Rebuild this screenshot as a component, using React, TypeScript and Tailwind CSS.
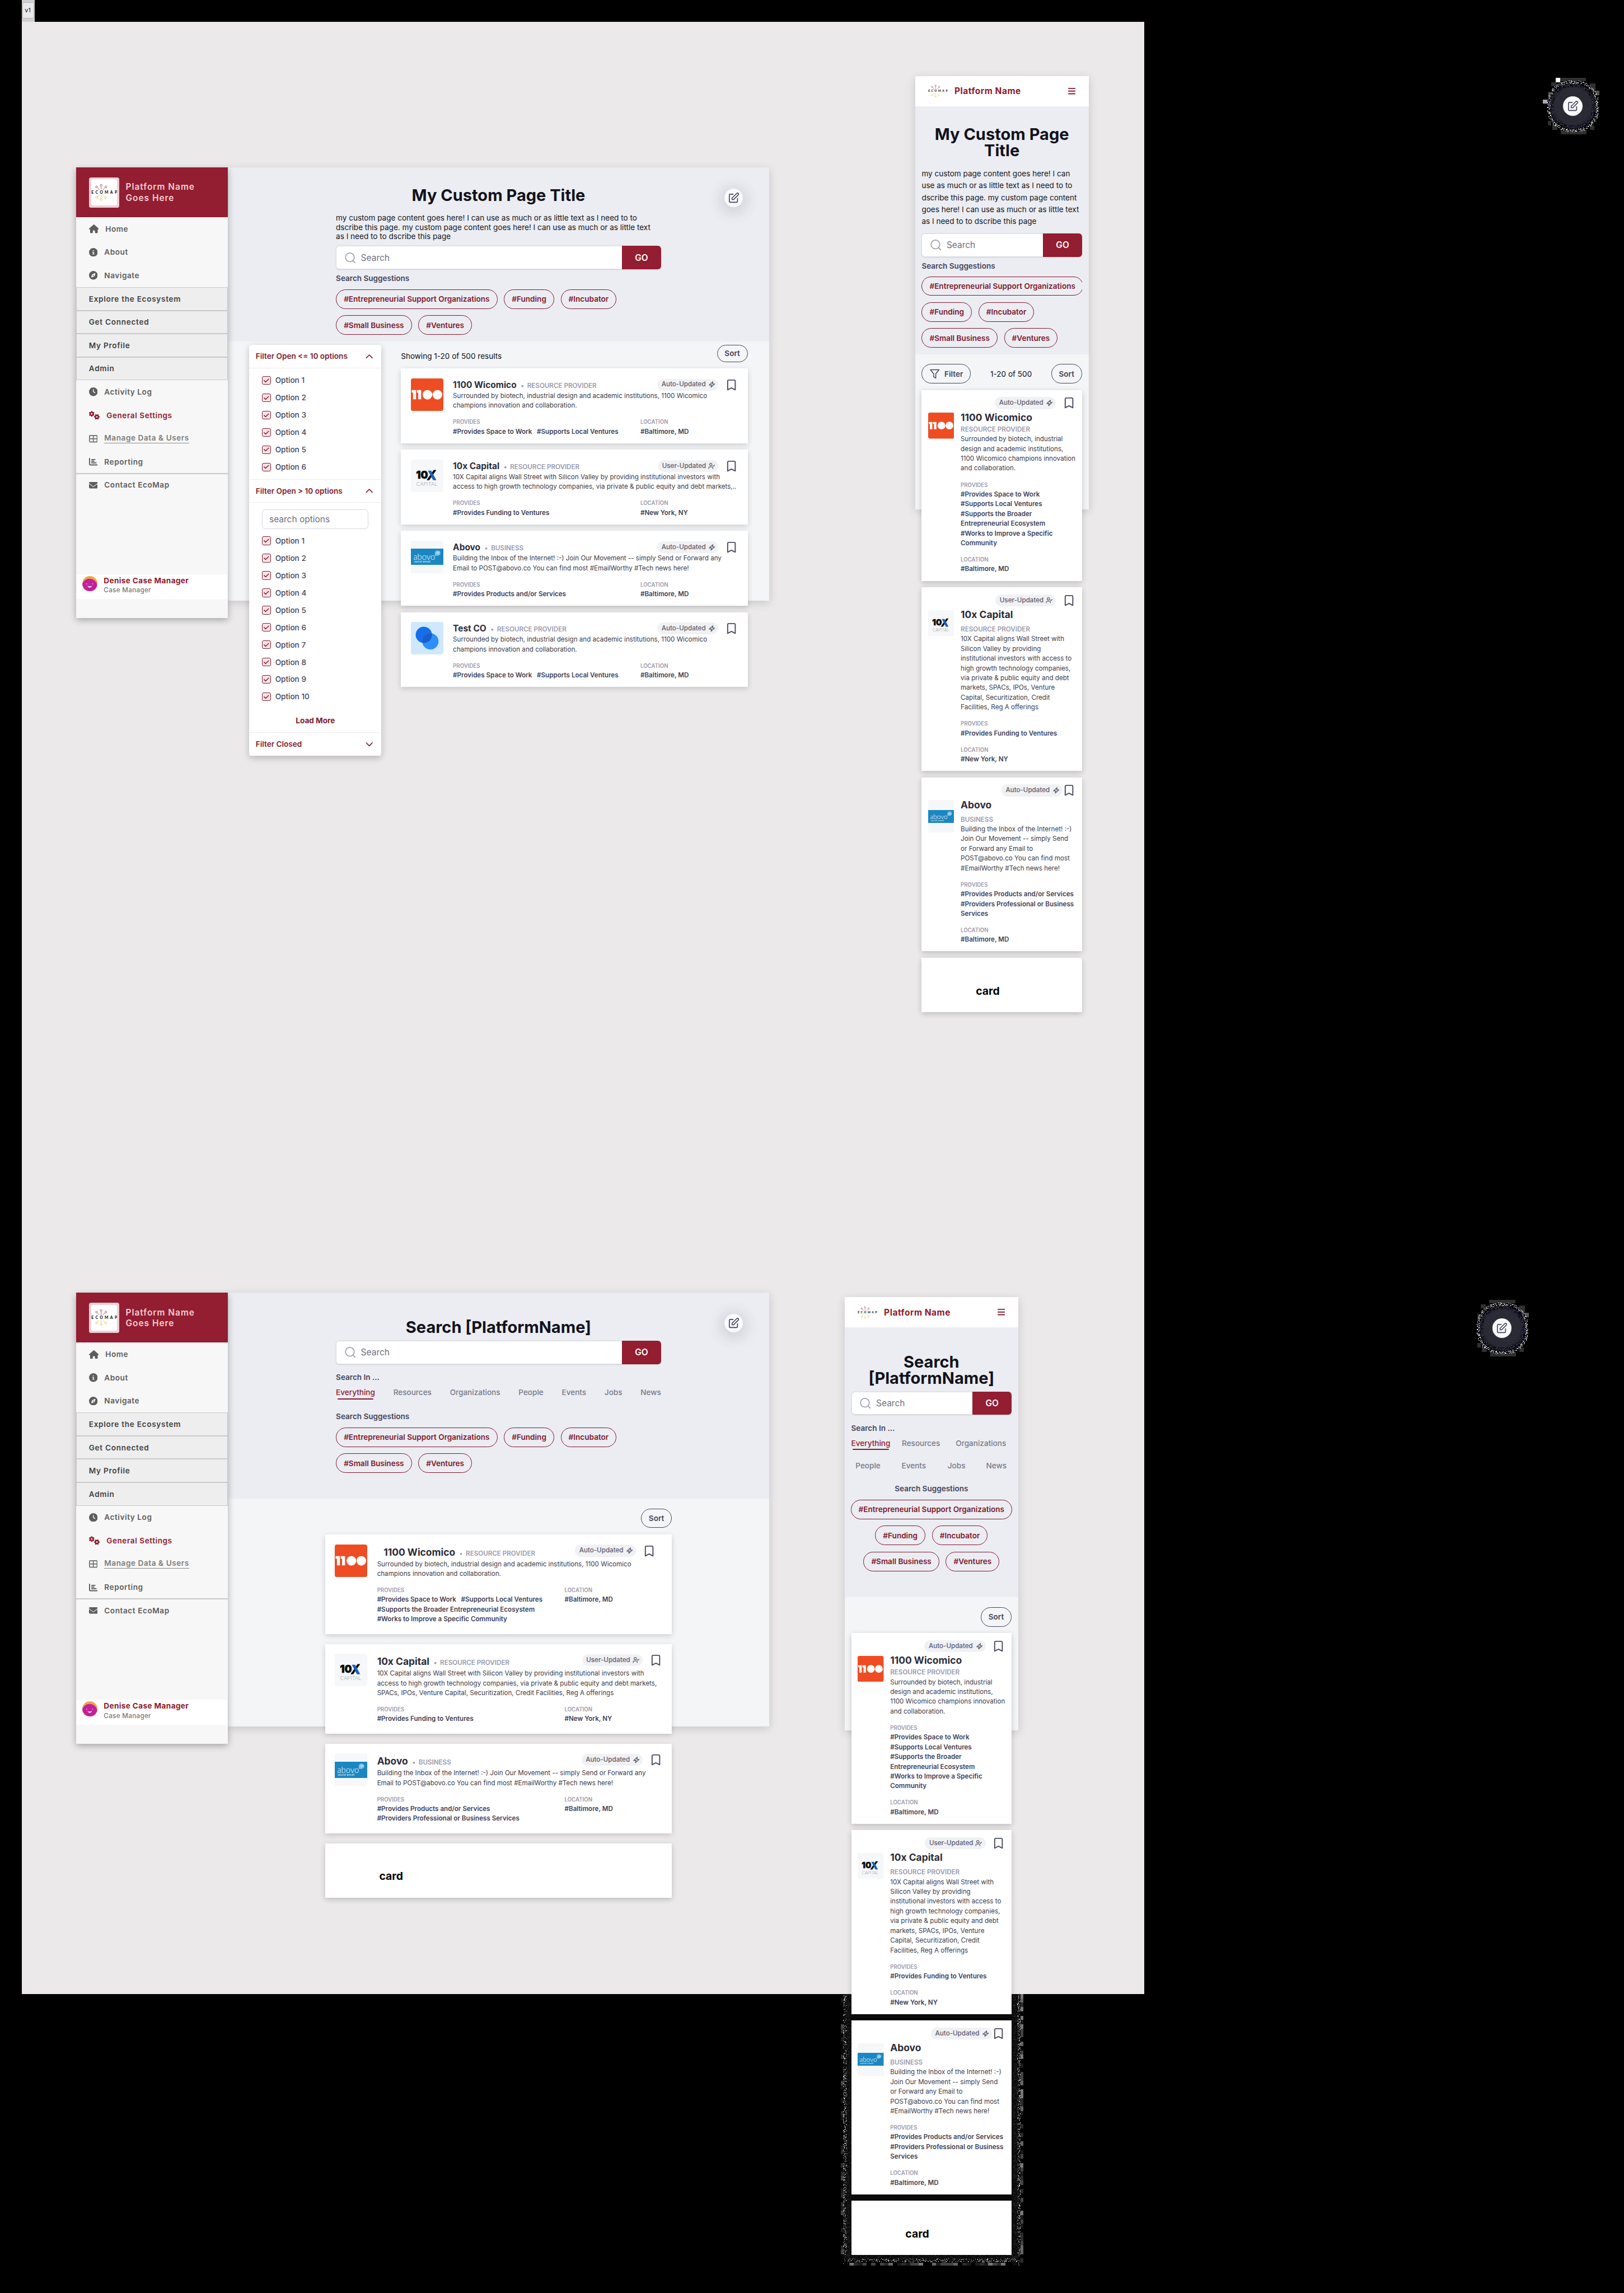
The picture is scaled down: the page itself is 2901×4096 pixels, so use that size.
import React from "react";
import {
  FaHouse,
  FaCircleInfo,
  FaCompass,
  FaClock,
  FaGears,
  FaTableCellsLarge,
  FaChartBar,
  FaEnvelope,
  FaBars,
} from "react-icons/fa6";
import { ChevronDown, ChevronUp, UserCheck } from "lucide-react";

/* ---------- icons and logos ---------- */

const BookmarkIcon = () => (
  <svg viewBox="0 0 24 24" className="h-6 w-6 shrink-0" fill="none" stroke="#4b4b63" strokeWidth={2} strokeLinecap="round" strokeLinejoin="round">
    <path d="M5 5a2 2 0 012-2h10a2 2 0 012 2v16l-7-3.5L5 21V5z" />
  </svg>
);

const EditIcon = () => (
  <svg viewBox="0 0 24 24" className="h-6 w-6 shrink-0" fill="none" stroke="#44445c" strokeWidth={1.7} strokeLinecap="round" strokeLinejoin="round">
    <path d="M11 5H6a2 2 0 00-2 2v11a2 2 0 002 2h11a2 2 0 002-2v-5m-1.414-9.414a2 2 0 112.828 2.828L11.828 15H9v-2.828l8.586-8.586z" />
  </svg>
);

const BoltIcon = () => (
  <svg viewBox="0 0 12 12" className="h-3 w-3 shrink-0" fill="none" stroke="#5a5a70" strokeWidth={1.4} strokeLinejoin="round">
    <path d="M7.8 0.9 L1 7 H5.2 L4.2 11.1 L11 5 H6.8 Z" />
  </svg>
);

const SearchIcon = () => (
  <svg viewBox="0 0 20 20" className="h-5 w-5 shrink-0" fill="none" stroke="#9a9cab" strokeWidth={1.7} strokeLinecap="round">
    <circle cx="9.3" cy="9" r="8.1" />
    <path d="M15 15.2 19.2 19.2" />
  </svg>
);

const FunnelIcon = () => (
  <svg viewBox="0 0 18 18" className="h-[18px] w-[18px]" fill="none" stroke="#44445c" strokeWidth={1.5} strokeLinejoin="round">
    <path d="M1 1.5H17L11 8.8V17L7 14.6V8.8Z" />
  </svg>
);

const EcoMapLogo = ({ className }: { className: string }) => (
  <svg viewBox="0 0 48 32" className={className} fill="none">
    <g stroke="#a03246" strokeWidth={0.8}>
      <circle cx="9.8" cy="6" r="1.7" />
      <circle cx="18.2" cy="3" r="1.7" />
      <circle cx="27" cy="6" r="1.7" />
      <path d="M11.2 7.6 15.3 11.6M18.2 5.5V11M25.4 7.6 21.3 11.6" />
    </g>
    <g stroke="#e3bb45" strokeWidth={0.8}>
      <circle cx="10" cy="26" r="1.7" />
      <circle cx="18.2" cy="29" r="1.7" />
      <circle cx="26.6" cy="26" r="1.7" />
      <path d="M11.4 24.4 15.3 20.6M18.2 26.5V21M25.2 24.4 21.3 20.6" />
    </g>
    <text x="0.3" y="18.6" textLength="47.4" fontFamily="Lato, sans-serif" fontWeight={900} fontSize="7" fill="#111">
      ECOMAP
    </text>
  </svg>
);

const Logo1100 = ({ className }: { className: string }) => (
  <svg viewBox="0 0 60 60" preserveAspectRatio="none" className={className}>
    <rect width="60" height="60" rx="4" fill="#ee4d23" />
    <path d="M1.5 21.5H9.5V38.5H4V26H1.5ZM11 21.5H19V38.5H13.5V26H11Z" fill="#fff" />
    <circle cx="30.6" cy="30" r="8.9" fill="#fff" />
    <circle cx="49" cy="30" r="8.9" fill="#fff" />
  </svg>
);

const Logo10x = ({ className }: { className: string }) => (
  <svg viewBox="0 0 60 60" className={className}>
    <rect width="60" height="60" rx="4" fill="#f6f7f9" />
    <text x="9.5" y="35" fontFamily="Inter, sans-serif" fontWeight={900} fontSize="19" textLength="22" lengthAdjust="spacingAndGlyphs" fill="#0a0a0a" stroke="#0a0a0a" strokeWidth={0.6}>
      10
    </text>
    <path d="M47 19H42L29 38H34Z" fill="#0a0a0a" />
    <path d="M31.5 20.5H37.5L47 38H41Z" fill="#1762b8" />
    <text x="10" y="48.5" fontFamily="Lato, sans-serif" fontWeight={300} fontSize="9.4" textLength="38.5" lengthAdjust="spacingAndGlyphs" fill="#9a9a9a">
      CAPITAL
    </text>
  </svg>
);

const LogoAbovo = ({ className }: { className: string }) => (
  <div className={"flex items-center rounded bg-[#f6f7f9] " + className}>
    <svg viewBox="0 15 60 30" className="w-full">
      <rect y="15" width="60" height="30" fill="#1b87c2" />
      <text x="4.6" y="35.5" fontFamily="Lato, sans-serif" fontWeight={300} fontSize="16" textLength="40" lengthAdjust="spacingAndGlyphs" fill="#fff">
        abovo
      </text>
      <text x="5.6" y="41.2" fontFamily="Lato, sans-serif" fontSize="5" textLength="30.5" lengthAdjust="spacingAndGlyphs" fill="#d9eef9">
        social email
      </text>
      <path d="M49.5 18.3a5 4.9 0 1 1 0 9.8H44.3V23.4A5 4.9 0 0 1 49.5 18.3Z" fill="#7cc4ea" />
      <text x="46" y="24.7" fontFamily="Inter, sans-serif" fontSize="4.2" fill="#fff">
        .co
      </text>
    </svg>
  </div>
);

const LogoTest = ({ className }: { className: string }) => (
  <svg viewBox="0 0 60 60" className={className}>
    <rect width="60" height="60" rx="4" fill="#cfe8ff" />
    <circle cx="36" cy="35.8" r="15" fill="#2d8ffb" />
    <circle cx="23.8" cy="23.7" r="15" fill="#136fea" />
    <path d="M38.8 23.7A15 15 0 0 1 21.1 38.5A15 15 0 0 1 38.8 21.1Z" fill="#1c5dcb" />
  </svg>
);

const Avatar = () => (
  <svg viewBox="0 0 28 28" className="h-7 w-7">
    <defs>
      <clipPath id="face">
        <circle cx="14" cy="14" r="14" />
      </clipPath>
    </defs>
    <g clipPath="url(#face)">
      <rect width="28" height="28" fill="#f0a44b" />
      <circle cx="13.5" cy="19" r="14" fill="#c1229b" />
    </g>
    <circle cx="8" cy="14.5" r="0.8" fill="#fff" />
    <circle cx="19" cy="14.5" r="0.8" fill="#fff" />
    <path d="M9 18.2Q13.5 20 18 18.2Q16.5 21.2 13.8 21.2Q11 21.2 9 18.2Z" fill="#fff" />
  </svg>
);

/* ---------- speckled halo drawn where shadows meet the black backdrop ---------- */

function seeded(seed: number) {
  let s = seed;
  return () => {
    s = (s * 1664525 + 1013904223) % 4294967296;
    return s / 4294967296;
  };
}

function ringSpecks(seed: number, n: number, r0: number, r1: number) {
  const rnd = seeded(seed);
  let d = "";
  for (let i = 0; i < n; i++) {
    const a = rnd() * Math.PI * 2;
    const r = r0 + (r1 - r0) * rnd();
    const c = Math.abs(Math.cos(a)) * Math.abs(Math.sin(a));
    const k = 1 + 0.12 * c;
    d += `M${(52 + Math.cos(a) * r * k).toFixed(0)} ${(52 + Math.sin(a) * r * k).toFixed(0)}h1v1h-1z`;
  }
  return d;
}

const RING_WHITE = ringSpecks(7, 420, 42, 47);
const RING_GREY = ringSpecks(11, 700, 36, 47);
const RING_BLACK = ringSpecks(19, 1100, 35, 46);
const RING_BLUE = ringSpecks(23, 160, 37, 42);
const RING_INNER = ringSpecks(29, 700, 18, 36);

const Halo = ({ sparks }: { sparks?: boolean }) => (
  <div className="relative h-[104px] w-[104px]">
    <svg viewBox="0 0 104 104" className="absolute inset-0 h-full w-full overflow-visible" shapeRendering="crispEdges">
      <g fill="#303030">
        <rect x="28" y="0" width="48" height="6" />
        <rect x="12" y="8" width="10" height="8" />
        <rect x="84" y="10" width="10" height="16" />
        <rect x="6" y="26" width="5" height="16" />
        <rect x="94" y="24" width="7" height="8" fill="#555" />
        <rect x="6" y="80" width="6" height="8" />
        <rect x="14" y="88" width="10" height="8" />
        <rect x="30" y="96" width="48" height="8" />
        <rect x="84" y="88" width="8" height="8" />
      </g>
      {sparks && (
        <>
          <rect x="21" y="0" width="8" height="8" fill="#fff" />
          <rect x="-3" y="40" width="8" height="8" fill="#aaa" />
        </>
      )}
      <circle cx="52" cy="52" r="46" fill="#050507" />
      <circle cx="52" cy="52" r="42" fill="#24242e" />
      <circle cx="52" cy="52" r="34" fill="#292934" />
      <path d={RING_INNER} fill="#30303c" />
      <path d={RING_GREY} fill="#4a4a50" />
      <path d={RING_BLACK} fill="#000" />
      <path d={RING_BLUE} fill="#10106a" />
      <path d={RING_WHITE} fill="#fff" />
    </svg>
    <div className="absolute inset-[34px] flex items-center justify-center rounded-full bg-[#f7f9fb]">
      <EditIcon />
    </div>
  </div>
);

function edgeSpecks(seed: number, n: number, spread: number, power: number) {
  const rnd = seeded(seed);
  let d = "";
  for (let i = 0; i < n; i++) {
    const depth = spread * Math.pow(rnd(), power);
    const t = rnd() * 1330;
    let x: number;
    let y: number;
    if (t < 500) {
      x = 4 + depth;
      y = t;
    } else if (t < 1000) {
      x = 331 - depth;
      y = t - 500;
    } else {
      x = t - 1000 + 4;
      y = 494 - depth;
    }
    if (y > 480 && (x < 12 || x > 324) && rnd() < 0.7) continue;
    d += `M${x.toFixed(0)} ${y.toFixed(0)}h1v1h-1z`;
  }
  return d;
}

const EDGE_WHITE = edgeSpecks(3, 1300, 6, 1.4);
const EDGE_GREY = edgeSpecks(5, 4200, 14, 1);
const EDGE_BLOCKS = (() => {
  const rnd = seeded(41);
  const out: { x: number; y: number; f: string }[] = [];
  const shades = ["#1a1a1a", "#2b2b2b", "#444", "#666", "#777"];
  for (let y = 0; y < 490; y += 8) {
    if (rnd() < 0.7) out.push({ x: 332, y, f: shades[Math.floor(rnd() * 5)] });
    if (rnd() < 0.3) out.push({ x: 0, y, f: shades[Math.floor(rnd() * 3)] });
  }
  for (let x = 16; x < 300; x += 8) if (rnd() < 0.8) out.push({ x, y: 496, f: shades[Math.floor(rnd() * 5)] });
  return out;
})();

const BottomGrain = () => (
  <svg viewBox="0 0 340 504" className="absolute left-[1552px] top-[3680px] h-[504px] w-[340px]" shapeRendering="crispEdges">
    {EDGE_BLOCKS.map((b, i) => (
      <rect key={i} x={b.x} y={b.y} width={b.x === 332 || b.x === 0 ? 5 : 8} height={b.y === 496 ? 5 : 8} fill={b.f} />
    ))}
    <path d="M5 0H330V480Q330 492 318 492H17Q5 492 5 480Z" fill="#0b0b0b" />
    <path d={EDGE_GREY} fill="#2c2c2c" />
    <path d={EDGE_WHITE} fill="#e8e8e8" />
  </svg>
);

/* ---------- shared pieces ---------- */

const Pill = ({ children }: { children: React.ReactNode }) => (
  <span className="flex h-9 shrink-0 items-center whitespace-nowrap rounded-full border border-[#80182d] px-[13.5px] text-[14px] font-semibold text-[#80182d]">
    {children}
  </span>
);

const SortButton = ({ className }: { className: string }) => (
  <button className={"flex w-[57px] items-center justify-center rounded-full border border-[#44445c] text-[14px] font-semibold text-[#44445c] " + className}>
    Sort
  </button>
);

const SearchBar = () => (
  <div className="flex h-[43px] rounded-md shadow-[0_1px_2px_rgba(0,0,0,0.12)]">
    <div className="flex flex-1 items-center gap-[10px] rounded-l-md border border-r-0 border-[#dcdde3] bg-white pl-[15px] text-[16px] text-[#6e7082]">
      <SearchIcon />
      Search
    </div>
    <div className="flex w-[72px] items-center justify-center rounded-r-md bg-[#931d31] text-[16px] font-semibold text-white">GO</div>
  </div>
);

const Label = ({ children, className = "" }: { children: React.ReactNode; className?: string }) => (
  <div className={"h-5 text-[14px] font-semibold leading-5 text-[#44445c] " + className}>{children}</div>
);

const EditButton = ({ className }: { className: string }) => (
  <div className={"absolute right-[49px] flex h-[34px] w-[34px] items-center justify-center rounded-full bg-[#f7f9fb] shadow-[0_4px_24px_8px_rgba(60,60,85,0.14)] " + className}>
    <EditIcon />
  </div>
);

/* ---------- sidebar ---------- */

const NavItem = ({ icon, label, className = "text-[#5d5d5d]" }: { icon: React.ReactNode; label: string; className?: string }) => (
  <div className={"flex h-[43px] items-center gap-[12.5px] pl-6 text-[14px] font-semibold tracking-[0.6px] " + className}>
    {icon}
    <span>{label}</span>
  </div>
);

const NavGroup = ({ label }: { label: string }) => (
  <div className="flex h-[43px] items-center border border-[#c9c9c9] bg-[#eeeeee] pl-[23px] text-[14px] font-semibold tracking-[0.75px] text-[#414141]">
    {label}
  </div>
);

const Sidebar = () => (
  <aside className="relative z-10 flex h-[832px] w-[280px] shrink-0 flex-col bg-[#f7f7f7] shadow-[0_4px_12px_rgba(0,0,0,0.3)]">
    <div className="flex h-[92px] shrink-0 items-center gap-3 bg-[#931d31] pl-6">
      <div className="h-14 w-14 rounded bg-[#ebd2d6] p-1">
        <div className="flex h-12 w-12 items-center justify-center rounded-sm bg-white">
          <EcoMapLogo className="h-8 w-12" />
        </div>
      </div>
      <div className="text-[16px] font-semibold leading-5 tracking-[1px] text-[#f5cdd3]">
        Platform Name
        <br />
        Goes Here
      </div>
    </div>
    <NavItem icon={<FaHouse className="h-4 w-[18px]" />} label="Home" />
    <NavItem icon={<FaCircleInfo className="h-4 w-4" />} label="About" />
    <NavItem icon={<FaCompass className="h-4 w-4" />} label="Navigate" />
    <NavGroup label="Explore the Ecosystem" />
    <NavGroup label="Get Connected" />
    <NavGroup label="My Profile" />
    <NavGroup label="Admin" />
    <NavItem icon={<FaClock className="h-4 w-4" />} label="Activity Log" />
    <NavItem icon={<FaGears className="h-4 w-5" />} label="General Settings" className="text-[#8f1a2e]" />
    <NavItem
      icon={<FaTableCellsLarge className="h-4 w-4" />}
      label="Manage Data & Users"
      className="text-[#7c7c7c] [&>span]:border-b [&>span]:border-[#8c8c8c] [&>span]:leading-[16px]"
    />
    <NavItem icon={<FaChartBar className="h-4 w-4" />} label="Reporting" className="text-[#5d5d5d]" />
    <div className="-mt-px h-[2px] shrink-0 bg-[#c9c9c9]" />
    <NavItem icon={<FaEnvelope className="h-4 w-4" />} label="Contact EcoMap" className="-mt-px text-[#5d5d5d]" />
    <div className="mt-auto mb-[35px] flex h-[46px] w-[278px] items-start gap-3 bg-white pl-[11.5px]">
      <div className="mt-[3px]">
        <Avatar />
      </div>
      <div className="pt-[3px]">
        <div className="text-[14px] font-bold leading-[18px] tracking-[0.4px] text-[#8f1a2e]">Denise Case Manager</div>
        <div className="text-[12px] font-medium leading-[18px] tracking-[0.35px] text-[#777777]">Case Manager</div>
      </div>
    </div>
  </aside>
);

/* ---------- filter panel ---------- */

const FilterHead = ({ label, open, className = "" }: { label: string; open: boolean; className?: string }) => (
  <div className={"flex h-11 items-center justify-between border-[#ececef] pl-3 pr-[11px] text-[14px] font-semibold text-[#7f1d2d] " + className}>
    {label}
    {open ? <ChevronUp className="h-[22px] w-[22px]" strokeWidth={1.9} /> : <ChevronDown className="h-[22px] w-[22px]" strokeWidth={1.9} />}
  </div>
);

const Option = ({ n }: { n: number }) => (
  <div className="flex h-8 items-center gap-2 pl-6 text-[14px] font-medium text-[#44445c]">
    <span className="flex h-4 w-4 items-center justify-center rounded-[3px] border border-[#7f1d2d] bg-[#f9e3e6]">
      <svg viewBox="0 0 12 12" className="h-3 w-3" fill="none" stroke="#7f1d2d" strokeWidth={1.5} strokeLinecap="round" strokeLinejoin="round">
        <path d="M1.8 6 4.6 8.8 10.2 3.4" />
      </svg>
    </span>
    Option {n}
  </div>
);

const FilterPanel = () => (
  <div className="h-[759px] w-[244px] shrink-0 rounded bg-white shadow-[0_4px_12px_rgba(0,0,0,0.22)]">
    <FilterHead label="Filter Open <= 10 options" open className="border-b" />
    <div className="h-[204px] pt-[6px]">
      {[1, 2, 3, 4, 5, 6].map((n) => (
        <Option key={n} n={n} />
      ))}
    </div>
    <FilterHead label="Filter Open > 10 options" open className="border-y" />
    <div className="h-[423px] pt-3">
      <div className="mx-6 mb-[6px] flex h-9 items-center rounded-md border border-[#d5d6dd] pl-3 text-[16px] text-[#6e7082]">search options</div>
      {[1, 2, 3, 4, 5, 6, 7, 8, 9, 10].map((n) => (
        <Option key={n} n={n} />
      ))}
      <div className="mt-[18px] text-center text-[14px] font-bold leading-5 text-[#7f1d2d]">Load More</div>
    </div>
    <FilterHead label="Filter Closed" open={false} className="border-t" />
  </div>
);

/* ---------- result cards ---------- */

type Entry = {
  name: string;
  kind: string;
  logo: (p: { className: string }) => React.ReactElement;
  auto: boolean;
  desc: string[];
  mobileDesc: string[];
  tags: string[][];
  mobileTags: string[];
  place: string;
};

const wicomico: Entry = {
  name: "1100 Wicomico",
  kind: "RESOURCE PROVIDER",
  logo: Logo1100,
  auto: true,
  desc: ["Surrounded by biotech, industrial design and academic institutions, 1100 Wicomico", "champions innovation and collaboration."],
  mobileDesc: ["Surrounded by biotech, industrial", "design and academic institutions,", "1100 Wicomico champions innovation", "and collaboration."],
  tags: [
    ["#Provides Space to Work", "#Supports Local Ventures"],
    ["#Supports the Broader Entrepreneurial Ecosystem"],
    ["#Works to Improve a Specific Community"],
  ],
  mobileTags: ["#Provides Space to Work", "#Supports Local Ventures", "#Supports the Broader", "Entrepreneurial Ecosystem", "#Works to Improve a Specific", "Community"],
  place: "#Baltimore, MD",
};

const tenx: Entry = {
  name: "10x Capital",
  kind: "RESOURCE PROVIDER",
  logo: Logo10x,
  auto: false,
  desc: [
    "10X Capital aligns Wall Street with Silicon Valley by providing institutional investors with",
    "access to high growth technology companies, via private & public equity and debt markets,",
    "SPACs, IPOs, Venture Capital, Securitization, Credit Facilities, Reg A offerings",
  ],
  mobileDesc: [
    "10X Capital aligns Wall Street with",
    "Silicon Valley by providing",
    "institutional investors with access to",
    "high growth technology companies,",
    "via private & public equity and debt",
    "markets, SPACs, IPOs, Venture",
    "Capital, Securitization, Credit",
    "Facilities, Reg A offerings",
  ],
  tags: [["#Provides Funding to Ventures"]],
  mobileTags: ["#Provides Funding to Ventures"],
  place: "#New York, NY",
};

const abovo: Entry = {
  name: "Abovo",
  kind: "BUSINESS",
  logo: LogoAbovo,
  auto: true,
  desc: ["Building the Inbox of the Internet! :-) Join Our Movement -- simply Send or Forward any", "Email to POST@abovo.co You can find most #EmailWorthy #Tech news here!"],
  mobileDesc: ["Building the Inbox of the Internet! :-)", "Join Our Movement -- simply Send", "or Forward any Email to", "POST@abovo.co You can find most", "#EmailWorthy #Tech news here!"],
  tags: [["#Provides Products and/or Services"], ["#Providers Professional or Business Services"]],
  mobileTags: ["#Provides Products and/or Services", "#Providers Professional or Business", "Services"],
  place: "#Baltimore, MD",
};

const testCo: Entry = { ...wicomico, name: "Test CO", logo: LogoTest };

const StatusBadge = ({ auto }: { auto: boolean }) => (
  <span
    className={
      "flex h-[22px] items-center gap-[6px] whitespace-nowrap rounded-full bg-[#f0f1f3] pl-2 text-[12px] font-medium text-[#5a5a70] " +
      (auto ? "w-[113px]" : "w-[112px]")
    }
  >
    {auto ? "Auto-Updated" : "User-Updated"}
    {auto ? <BoltIcon /> : <UserCheck className="-ml-0.5 h-[13px] w-[13px] shrink-0" strokeWidth={2.3} />}
  </span>
);

const SmallHead = ({ children }: { children: React.ReactNode }) => (
  <div className="text-[10px] font-semibold leading-[18px] text-[#9a9aae]">{children}</div>
);

const Lines = ({ rows, className }: { rows: string[]; className: string }) => (
  <div className={"whitespace-nowrap text-[12px] leading-[18px] " + className}>
    {rows.map((r) => (
      <div key={r}>{r}</div>
    ))}
  </div>
);

const WideCard = ({ e, large, indent }: { e: Entry; large?: boolean; indent?: boolean }) => {
  const desc = large ? e.desc : e.desc.slice(0, 2).map((l) => l.replace("debt markets,", "debt markets,.."));
  const tags = large ? e.tags : e.tags.slice(0, 1);
  return (
    <article className={"flex w-[640px] gap-[18px] bg-white pl-[18px] pt-[18px] shadow-[0_3px_10px_rgba(0,0,0,0.16)] " + (large ? "pb-[18px]" : "pb-3")}>
      <e.logo className="h-[60px] w-[60px] shrink-0" />
      <div className="flex-1">
        <div className={"flex items-start justify-between " + (large ? "h-7 " : "h-6 ") + (indent ? "pl-3 pr-[30px]" : "pr-[18px]")}>
          <div className={"flex items-baseline font-bold text-[#2c2c3a] " + (large ? "text-[18px] leading-7" : "text-[16px] leading-6")}>
            {e.name}
            <span className="ml-[8px] mr-[6px] text-[12px] text-[#9a9aae]">•</span>
            <span className="text-[12px] font-semibold text-[#9a9aae]">{e.kind}</span>
          </div>
          <div className="flex h-6 items-center gap-3">
            <StatusBadge auto={e.auto} />
            <BookmarkIcon />
          </div>
        </div>
        <Lines rows={desc} className="text-[#3c3c4b]" />
        <div className="mt-3 flex">
          <div className="w-[346px]">
            <SmallHead>PROVIDES</SmallHead>
            {tags.map((row) => (
              <div key={row[0]} className="flex gap-[9px] whitespace-nowrap text-[12px] font-semibold leading-[18px] text-[#3f3f57]">
                {row.map((t) => (
                  <span key={t}>{t}</span>
                ))}
              </div>
            ))}
          </div>
          <div>
            <SmallHead>LOCATION</SmallHead>
            <Lines rows={[e.place]} className="font-semibold text-[#3f3f57]" />
          </div>
        </div>
      </div>
    </article>
  );
};

const NarrowCard = ({ e, roomy, tight }: { e: Entry; roomy?: boolean; tight?: boolean }) => (
  <article className="w-[296px] bg-white p-3 shadow-[0_3px_10px_rgba(0,0,0,0.2)]">
    <div className={"flex h-6 items-center justify-end " + (tight ? "" : "gap-3")}>
      <StatusBadge auto={e.auto} />
      <BookmarkIcon />
    </div>
    <div className="flex gap-3">
      <e.logo className={"mt-[6px] w-12 shrink-0 " + (tight ? "h-[60px]" : "h-12")} />
      <div>
        <div className={"h-7 text-[18px] font-bold leading-7 text-[#2c2c3a] " + (roomy ? "mb-[5px]" : "")}>{e.name}</div>
        <div className="text-[12px] font-semibold leading-[18px] text-[#9a9aae]">{e.kind}</div>
        <Lines rows={e.mobileDesc} className="mb-3 text-[#3c3c4b]" />
        <SmallHead>PROVIDES</SmallHead>
        <Lines rows={e.mobileTags} className="mb-3 font-semibold text-[#3f3f57]" />
        <SmallHead>LOCATION</SmallHead>
        <Lines rows={[e.place]} className="font-semibold text-[#3f3f57]" />
      </div>
    </div>
  </article>
);

const EmptyCard = ({ className }: { className: string }) => (
  <article className={"flex h-[100px] items-center bg-white pl-[100px] pt-[22px] text-[20px] font-bold text-black shadow-[0_3px_10px_rgba(0,0,0,0.2)] " + className}>
    card
  </article>
);

const NarrowCards = () => (
  <div className="mt-3 flex flex-col gap-3">
    <NarrowCard e={wicomico} />
    <NarrowCard e={tenx} roomy />
    <NarrowCard e={abovo} roomy tight />
    <EmptyCard className="w-[296px]" />
  </div>
);

/* ---------- screens ---------- */

const PhoneBar = () => (
  <header className="flex h-14 items-center bg-white px-6">
    <EcoMapLogo className="h-6 w-9" />
    <span className="ml-[12.5px] flex-1 text-[16px] font-bold tracking-[0.55px] text-[#8f1a2e]">Platform Name</span>
    <FaBars className="h-4 w-[14px] text-[#8f1a2e]" />
  </header>
);

const frameShadow = "shadow-[0_4px_16px_rgba(0,0,0,0.16)]";

const CustomDesktop = () => (
  <div className="absolute left-[140px] top-[309px] flex h-[800px] w-[1280px] items-start">
    <Sidebar />
    <main className={"relative h-[800px] w-[1000px] bg-[#f3f5f7] " + frameShadow}>
      <EditButton className="top-[39px]" />
      <section className="h-[321px] bg-[#ebedf2] px-[200px] pt-[34px]">
        <h1 className="whitespace-nowrap text-center text-[30px] font-bold leading-9 text-[#12121c]">My Custom Page Title</h1>
        <p className="mb-[9px] mt-[15px] whitespace-nowrap text-[14px] leading-[17px] text-[#12121c]">
          my custom page content goes here! I can use as much or as little text as I need to to
          <br />
          dscribe this page. my custom page content goes here! I can use as much or as little text
          <br />
          as I need to to dscribe this page
        </p>
        <SearchBar />
        <Label className="mb-[10px] mt-[7px]">Search Suggestions</Label>
        <div className="flex flex-wrap gap-3">
          <Pill>#Entrepreneurial Support Organizations</Pill>
          <Pill>#Funding</Pill>
          <Pill>#Incubator</Pill>
          <Pill>#Small Business</Pill>
          <Pill>#Ventures</Pill>
        </div>
      </section>
      <div className="flex gap-9 pl-10 pt-[6px]">
        <FilterPanel />
        <div className="w-[640px]">
          <div className="mb-3 flex h-8 items-start justify-between">
            <span className="pt-3 text-[14px] leading-5 text-[#0c0c14]">Showing 1-20 of 500 results</span>
            <SortButton className="h-8" />
          </div>
          <div className="flex flex-col gap-3">
            <WideCard e={wicomico} />
            <WideCard e={tenx} />
            <WideCard e={abovo} />
            <WideCard e={testCo} />
          </div>
        </div>
      </div>
    </main>
  </div>
);

const SearchDesktop = () => (
  <div className="absolute left-[140px] top-[2386px] flex h-[800px] w-[1280px] items-start">
    <Sidebar />
    <main className={"relative h-[800px] w-[1000px] bg-[#f3f5f7] " + frameShadow}>
      <EditButton className="top-[39px]" />
      <section className="h-[380px] bg-[#ebedf2] px-[200px] pt-[46.5px]">
        <h1 className="mb-[6px] whitespace-nowrap text-center text-[30px] font-bold leading-9 text-[#12121c]">Search [PlatformName]</h1>
        <SearchBar />
        <Label className="mb-2 mt-[15px]">Search In ...</Label>
        <nav className="mb-6 flex h-5 justify-between text-[14px] font-medium leading-5 text-[#77798a]">
          <span className="flex flex-col items-center text-[#8f1a2e]">
            Everything
            <span className="h-[2px] w-[67px] shrink-0 rounded-full bg-[#7f1d2d]" />
          </span>
          <span>Resources</span>
          <span>Organizations</span>
          <span>People</span>
          <span>Events</span>
          <span>Jobs</span>
          <span>News</span>
        </nav>
        <Label className="mb-[10px]">Search Suggestions</Label>
        <div className="flex flex-wrap gap-3">
          <Pill>#Entrepreneurial Support Organizations</Pill>
          <Pill>#Funding</Pill>
          <Pill>#Incubator</Pill>
          <Pill>#Small Business</Pill>
          <Pill>#Ventures</Pill>
        </div>
      </section>
      <div className="mx-auto w-[640px] pt-[18px]">
        <div className="mb-3 flex justify-end">
          <SortButton className="h-9" />
        </div>
        <div className="flex flex-col gap-[18px]">
          <WideCard e={wicomico} large indent />
          <WideCard e={tenx} large />
          <WideCard e={abovo} large />
          <EmptyCard className="w-[640px]" />
        </div>
      </div>
    </main>
  </div>
);

const CustomPhone = () => (
  <div className={"absolute left-[1689px] top-[140px] h-[800px] w-[320px] bg-[#f3f5f7] " + frameShadow}>
    <PhoneBar />
    <section className="h-[458px] bg-[#ebedf2] px-3 pt-9">
      <h1 className="text-center text-[30px] font-bold leading-[30px] text-[#12121c]">
        My Custom Page
        <br />
        Title
      </h1>
      <p className="mb-[11px] mt-[18px] whitespace-nowrap text-[14px] leading-[22px] text-[#12121c]">
        my custom page content goes here! I can
        <br />
        use as much or as little text as I need to to
        <br />
        dscribe this page. my custom page content
        <br />
        goes here! I can use as much or as little text
        <br />
        as I need to to dscribe this page
      </p>
      <SearchBar />
      <Label className="mb-[9px] mt-[7px]">Search Suggestions</Label>
      <div className="flex flex-wrap gap-3 overflow-hidden">
        <Pill>#Entrepreneurial Support Organizations</Pill>
        <Pill>#Funding</Pill>
        <Pill>#Incubator</Pill>
        <Pill>#Small Business</Pill>
        <Pill>#Ventures</Pill>
      </div>
    </section>
    <div className="px-3 pt-[18px]">
      <div className="flex items-center justify-between">
        <button className="flex h-9 w-[91px] items-center gap-[9px] rounded-full border border-[#44445c] pl-[14px] text-[14px] font-semibold text-[#44445c]">
          <FunnelIcon />
          Filter
        </button>
        <span className="text-[14px] text-[#0c0c14]">1-20 of 500</span>
        <SortButton className="h-9" />
      </div>
      <NarrowCards />
    </div>
  </div>
);

const SearchPhone = () => (
  <div className={"absolute left-[1559px] top-[2394px] h-[800px] w-[320px] bg-[#f3f5f7] " + frameShadow}>
    <PhoneBar />
    <section className="h-[498px] bg-[#ebedf2] px-3 pt-12">
      <h1 className="mb-[10px] text-center text-[30px] font-bold leading-[30px] text-[#12121c]">
        Search
        <br />
        [PlatformName]
      </h1>
      <SearchBar />
      <Label className="mb-2 mt-[15px]">Search In ...</Label>
      <nav className="text-[14px] font-medium leading-5 text-[#77798a]">
        <div className="flex h-5">
          <span className="w-[93.5px] text-[#8f1a2e]">
            Everything
            <span className="ml-[3px] block h-[2px] w-[67px] rounded-full bg-[#7f1d2d]" />
          </span>
          <span className="w-[99.5px]">Resources</span>
          <span>Organizations</span>
        </div>
        <div className="mt-[22px] flex h-5 pl-2">
          <span className="w-[85px]">People</span>
          <span className="w-[85px]">Events</span>
          <span className="w-[71px]">Jobs</span>
          <span>News</span>
        </div>
      </nav>
      <Label className="mb-[10px] mt-[22px] text-center">Search Suggestions</Label>
      <div className="-mx-2 flex flex-wrap justify-center gap-3">
        <Pill>#Entrepreneurial Support Organizations</Pill>
        <div className="flex w-full justify-center gap-3">
          <Pill>#Funding</Pill>
          <Pill>#Incubator</Pill>
        </div>
        <Pill>#Small Business</Pill>
        <Pill>#Ventures</Pill>
      </div>
    </section>
    <div className="px-3 pt-[18px]">
      <div className="flex justify-end">
        <SortButton className="h-9" />
      </div>
      <NarrowCards />
    </div>
  </div>
);

export default function App() {
  return (
    <div className="h-[4096px] w-[2901px] overflow-hidden bg-black font-['Inter',sans-serif]">
      <div className="relative h-[4232px] w-[2997px] [zoom:0.9679]">
        <div className="absolute left-10 top-0 flex h-10 w-6 flex-col items-center bg-[#d1d0d1]">
          <span className="mt-1 flex h-[30px] w-[22px] items-center justify-center whitespace-nowrap rounded-[2px] border border-[#b5b4b5] bg-[#ebe9ea] font-['Noto_Sans',sans-serif] text-[11px] leading-none text-black">
            v1
          </span>
        </div>
        <div className="absolute left-10 top-10 h-[3640px] w-[2072px] bg-[#ebe9ea]" />
        <BottomGrain />
        <CustomDesktop />
        <CustomPhone />
        <SearchDesktop />
        <SearchPhone />
        <div className="absolute left-[2851px] top-[144px]">
          <Halo sparks />
        </div>
        <div className="absolute left-[2720px] top-[2399px]">
          <Halo />
        </div>
      </div>
    </div>
  );
}
